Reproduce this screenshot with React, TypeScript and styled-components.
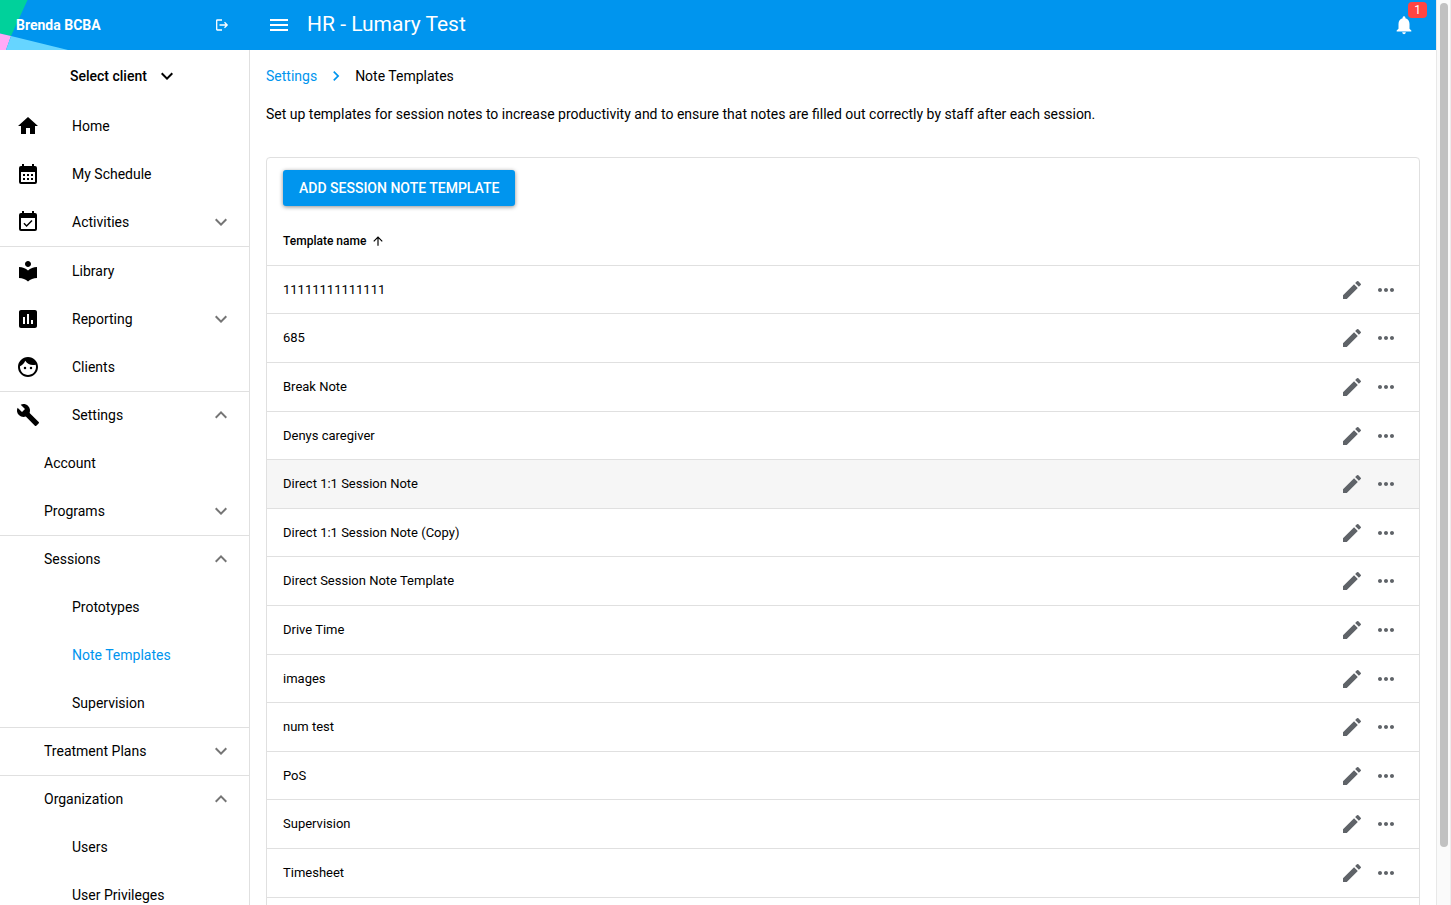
import React from "react";
import styled, { createGlobalStyle } from "styled-components";
import {
  MdArrowUpward,
  MdAssessment,
  MdBuild,
  MdChevronRight,
  MdEdit,
  MdExpandLess,
  MdExpandMore,
  MdFace,
  MdHome,
  MdLocalLibrary,
  MdMenu,
  MdMoreHoriz,
  MdNotifications,
} from "react-icons/md";

const blue = "#0095ee";
const line = "#e0e0e0";

const GlobalStyle = createGlobalStyle`
  * { box-sizing: border-box; }
  body {
    margin: 0;
    background: #fff;
    color: #000;
    font-family: Roboto, "Liberation Sans", sans-serif;
    font-size: 14px;
    line-height: 20px;
  }
  button { font: inherit; color: inherit; border: 0; background: none; padding: 0; cursor: pointer; }
  svg { display: block; flex: none; }
`;

const Shell = styled.div`
  display: grid;
  grid-template-columns: 250px minmax(0, 1fr) 15px;
  grid-template-rows: 50px minmax(0, 1fr);
  height: 100vh;
  overflow: hidden;
`;

const UserBar = styled.div`
  position: relative;
  display: flex;
  align-items: center;
  justify-content: space-between;
  padding: 0 20px 0 16px;
  background: ${blue};
  color: #fff;
`;

const Corner = styled.svg`
  position: absolute;
  left: 0;
  top: 0;
`;

const UserName = styled.strong`
  position: relative;
  font-weight: 700;
`;

const TopBar = styled.header`
  display: flex;
  align-items: center;
  padding: 0 21px 0 17px;
  background: ${blue};
  color: #fff;
`;

const Title = styled.h1`
  flex: 1;
  margin: 0 0 2px 16px;
  font-size: 21px;
  line-height: 28px;
  font-weight: 400;
`;

const BellButton = styled.button`
  position: relative;
`;

const Badge = styled.span`
  position: absolute;
  top: -12px;
  right: -12px;
  width: 19px;
  height: 16px;
  border-radius: 4px;
  background: #ff4541;
  font-size: 12px;
  line-height: 16px;
  text-align: center;
`;

const Sidebar = styled.aside`
  border-right: 1px solid ${line};
  overflow: hidden;
`;

const ClientPicker = styled.button`
  display: flex;
  align-items: center;
  gap: 8px;
  width: 100%;
  height: 52px;
  padding-left: 70px;
  font-weight: 500;
`;

const NavGroup = styled.ul<{ $ruled?: boolean }>`
  list-style: none;
  margin: 0;
  padding: 0;
  border-bottom: ${(p) => (p.$ruled ? `1px solid ${line}` : "0")};
`;

const NavLink = styled.a<{ $level: number; $divided?: boolean; $active?: boolean }>`
  display: flex;
  align-items: center;
  height: 48px;
  padding: 0 16px 0 ${(p) => [16, 44, 72][p.$level]}px;
  color: ${(p) => (p.$active ? blue : "inherit")};
  text-decoration: none;
  box-shadow: ${(p) => (p.$divided ? `inset 0 1px ${line}` : "none")};
`;

const NavIcon = styled.span`
  width: 56px;
`;

const NavText = styled.span`
  flex: 1;
`;

const NavArrow = styled.span`
  color: #757575;
`;

const Main = styled.main`
  padding: 16px 16px 0;
  overflow: hidden;
`;

const Breadcrumb = styled.nav`
  display: flex;
  align-items: center;
  gap: 9px;
  height: 20px;

  a { color: ${blue}; text-decoration: none; }
  svg { color: ${blue}; }
`;

const Intro = styled.p`
  margin: 18px 0 33px;
`;

const Card = styled.section`
  padding-bottom: 48px;
  border: 1px solid ${line};
  border-radius: 4px;
`;

const AddButton = styled.button`
  display: block;
  margin: 12px 16px 11px;
  height: 36px;
  padding: 0 16px;
  border-radius: 3px;
  background: ${blue};
  color: #fff;
  font-weight: 500;
  box-shadow: 0 1px 4px rgba(0, 0, 0, 0.45);
`;

const Table = styled.table`
  width: 100%;
  border-collapse: separate;
  border-spacing: 0;
`;

const HeadCell = styled.th`
  height: 49px;
  padding: 0 16px;
  border-bottom: 1px solid ${line};
  font-size: 12px;
  font-weight: 500;
  text-align: left;
`;

const SortButton = styled.button`
  display: flex;
  align-items: center;
  gap: 5px;
`;

const Row = styled.tr<{ $hovered?: boolean }>`
  height: 49px;
  background: ${(p) => (p.$hovered ? "#f6f6f6" : "transparent")};

  &:nth-child(5n + 1), &:nth-child(5n + 4) { height: 48px; }
`;

const Cell = styled.td`
  padding: 0 16px;
  border-bottom: 1px solid ${line};
  font-size: 13px;
`;

const Actions = styled.div`
  display: flex;
  justify-content: flex-end;
  align-items: center;
  gap: 10px;
  padding-right: 5px;
  color: #5f6368;
`;

const ScrollTrack = styled.div`
  grid-column: 3;
  grid-row: 1 / 3;
  padding: 3px 3px 0;
  border-left: 1px solid #e8e8e8;
  border-right: 1px solid #ededed;
  background: #fafafa;
`;

const ScrollThumb = styled.div`
  width: 8px;
  height: calc(100% - 58px);
  border-radius: 4px;
  background: #c1c1c1;
`;

type Item = {
  text: string;
  level?: number;
  icon?: React.ReactNode;
  arrow?: "up" | "down";
  divided?: boolean;
  active?: boolean;
};

const topItems: Item[] = [
  { text: "Home", icon: <MdHome size={24} /> },
  { text: "My Schedule", icon: <ScheduleIcon /> },
  { text: "Activities", icon: <ActivitiesIcon />, arrow: "down" },
];

const items: Item[] = [
  { text: "Library", icon: <MdLocalLibrary size={24} /> },
  { text: "Reporting", icon: <MdAssessment size={24} />, arrow: "down" },
  { text: "Clients", icon: <MdFace size={24} /> },
  { text: "Settings", icon: <MdBuild size={24} />, arrow: "up", divided: true },
  { text: "Account", level: 1 },
  { text: "Programs", level: 1, arrow: "down" },
  { text: "Sessions", level: 1, arrow: "up", divided: true },
  { text: "Prototypes", level: 2 },
  { text: "Note Templates", level: 2, active: true },
  { text: "Supervision", level: 2 },
  { text: "Treatment Plans", level: 1, arrow: "down", divided: true },
  { text: "Organization", level: 1, arrow: "up", divided: true },
  { text: "Users", level: 2 },
  { text: "User Privileges", level: 2 },
];

const templates = [
  "11111111111111",
  "685",
  "Break Note",
  "Denys caregiver",
  "Direct 1:1 Session Note",
  "Direct 1:1 Session Note (Copy)",
  "Direct Session Note Template",
  "Drive Time",
  "images",
  "num test",
  "PoS",
  "Supervision",
  "Timesheet",
];

function ScheduleIcon() {
  return (
    <svg width="24" height="24" viewBox="0 0 24 24" fill="currentColor">
      <path d="M19 4h-1V2h-2v2H8V2H6v2H5a2 2 0 0 0-2 2v14a2 2 0 0 0 2 2h14a2 2 0 0 0 2-2V6a2 2 0 0 0-2-2zm0 16H5V10h14V20z" />
      <path d="M7 12h2v2H7zM11 12h2v2h-2zM15 12h2v2h-2zM7 16h2v2H7zM11 16h2v2h-2zM15 16h2v2h-2z" />
    </svg>
  );
}

function ActivitiesIcon() {
  return (
    <svg width="24" height="24" viewBox="0 0 24 24" fill="currentColor">
      <path d="M19 3h-1V1h-2v2H8V1H6v2H5a2 2 0 0 0-2 2v14a2 2 0 0 0 2 2h14a2 2 0 0 0 2-2V5a2 2 0 0 0-2-2zm0 16H5V8h14v11z" />
      <path d="M16.530 11.060l-1.060-1.060-4.880 4.880-2.120-2.120-1.060 1.060L10.590 17z" />
    </svg>
  );
}

function NavItem({ item }: { item: Item }) {
  return (
    <li>
      <NavLink href="#" $level={item.level ?? 0} $divided={item.divided} $active={item.active}>
        {item.icon && <NavIcon>{item.icon}</NavIcon>}
        <NavText>{item.text}</NavText>
        {item.arrow && (
          <NavArrow>
            {item.arrow === "up" ? <MdExpandLess size={24} /> : <MdExpandMore size={24} />}
          </NavArrow>
        )}
      </NavLink>
    </li>
  );
}

export default function App() {
  return (
    <>
      <GlobalStyle />
      <Shell>
        <UserBar>
          <Corner width="70" height="50" viewBox="0 0 70 50" aria-hidden="true">
            <path d="M0 0H27.500L11 36L0 33.500z" fill="#00d19b" />
            <path d="M0 33.500L11 36L6 50H0z" fill="#ffaaf7" />
            <path d="M11 36L68 50H6z" fill="#66d5ff" />
          </Corner>
          <UserName>Brenda BCBA</UserName>
          <button aria-label="Log out">
            <svg width="16" height="16" viewBox="0 0 16 16" fill="none" stroke="#fff" strokeWidth="1.300">
              <path d="M8 3H3.200Q2.700 3 2.700 3.500V12.500Q2.700 13 3.200 13H8M5.500 8H13M10.500 5.300L13.200 8L10.500 10.700" />
            </svg>
          </button>
        </UserBar>
        <TopBar>
          <button aria-label="Menu"><MdMenu size={24} /></button>
          <Title>HR - Lumary Test</Title>
          <BellButton aria-label="Notifications">
            <MdNotifications size={22} />
            <Badge>1</Badge>
          </BellButton>
        </TopBar>
        <ScrollTrack>
          <ScrollThumb />
        </ScrollTrack>
        <Sidebar>
          <ClientPicker>
            Select client
            <MdExpandMore size={24} />
          </ClientPicker>
          <NavGroup $ruled>
            {topItems.map((item) => <NavItem key={item.text} item={item} />)}
          </NavGroup>
          <NavGroup>
            {items.map((item) => <NavItem key={item.text} item={item} />)}
          </NavGroup>
        </Sidebar>
        <Main>
          <Breadcrumb>
            <a href="#">Settings</a>
            <MdChevronRight size={20} />
            <span>Note Templates</span>
          </Breadcrumb>
          <Intro>
            Set up templates for session notes to increase productivity and to ensure that notes are filled out correctly by staff after each session.
          </Intro>
          <Card>
            <AddButton>ADD SESSION NOTE TEMPLATE</AddButton>
            <Table>
              <thead>
                <tr>
                  <HeadCell colSpan={2}>
                    <SortButton>
                      Template name
                      <MdArrowUpward size={14} />
                    </SortButton>
                  </HeadCell>
                </tr>
              </thead>
              <tbody>
                {templates.map((name, i) => (
                  <Row key={name} $hovered={i === 4}>
                    <Cell>{name}</Cell>
                    <Cell>
                      <Actions>
                        <button aria-label={`Edit ${name}`}><MdEdit size={24} /></button>
                        <button aria-label={`More actions for ${name}`}><MdMoreHoriz size={24} /></button>
                      </Actions>
                    </Cell>
                  </Row>
                ))}
              </tbody>
            </Table>
          </Card>
        </Main>
      </Shell>
    </>
  );
}
